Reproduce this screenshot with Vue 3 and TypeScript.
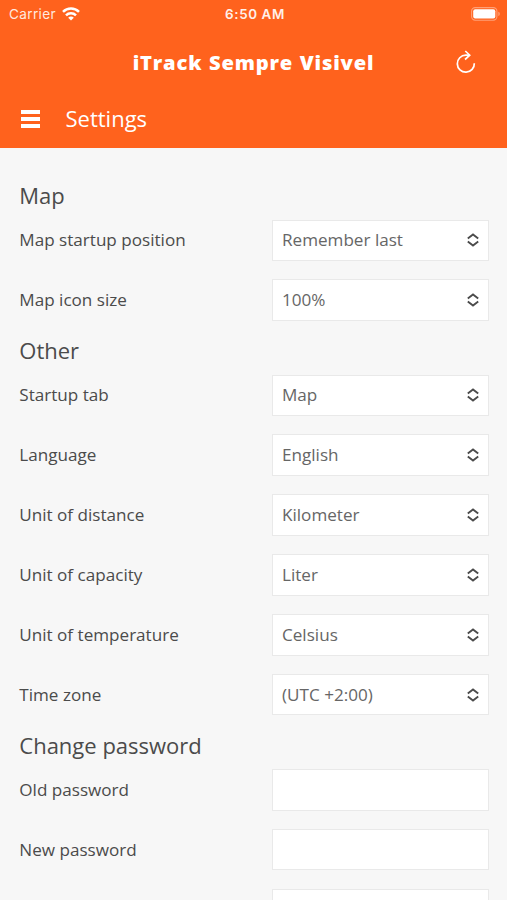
<script setup lang="ts">
interface Field {
  label: string
  value?: string
}

interface Section {
  title: string
  fields: Field[]
}

const sections: Section[] = [
  {
    title: 'Map',
    fields: [
      { label: 'Map startup position', value: 'Remember last' },
      { label: 'Map icon size', value: '100%' },
    ],
  },
  {
    title: 'Other',
    fields: [
      { label: 'Startup tab', value: 'Map' },
      { label: 'Language', value: 'English' },
      { label: 'Unit of distance', value: 'Kilometer' },
      { label: 'Unit of capacity', value: 'Liter' },
      { label: 'Unit of temperature', value: 'Celsius' },
      { label: 'Time zone', value: '(UTC +2:00)' },
    ],
  },
  {
    title: 'Change password',
    fields: [{ label: 'Old password' }, { label: 'New password' }, { label: '' }],
  },
]
</script>

<template>
  <div class="screen">
    <header class="header">
      <div class="status">
        <div class="carrier">
          <span>Carrier</span>
          <svg class="wifi" viewBox="0 0 18 14" fill="none" stroke="#fff" stroke-width="2.5">
            <path d="M1 4.900a11.400 11.400 0 0 1 16 0" />
            <path d="M4 8.300a7.100 7.100 0 0 1 10 0" />
            <path d="M9 13.600 6.200 10.800a3.900 3.900 0 0 1 5.600 0z" fill="#fff" stroke="none" />
          </svg>
        </div>
        <span class="time">6:50 AM</span>
        <svg class="battery" viewBox="0 0 30 14">
          <rect x="0.6" y="0.6" width="25.3" height="12.6" rx="3.6" fill="none" stroke="#fff" stroke-opacity=".4" stroke-width="1.1" />
          <rect x="2.2" y="2.3" width="22.1" height="9.2" rx="2" fill="#fff" />
          <path d="M27.3 4.800c2 .6 2 3.700 0 4.300z" fill="#fff" fill-opacity=".4" />
        </svg>
      </div>
      <div class="brand">
        <h1>iTrack Sempre Visivel</h1>
        <button class="refresh" aria-label="Refresh">
          <svg viewBox="0 0 20 24" fill="none" stroke="#fff" stroke-width="1.7">
            <path d="M18.300 13.200A8.500 8.500 0 1 1 9.800 5.200H13" />
            <path d="M9.300 1 13.700 5.200 9 9.500" />
          </svg>
        </button>
      </div>
      <div class="toolbar">
        <button class="menu" aria-label="Menu"><i></i><i></i><i></i></button>
        <h2>Settings</h2>
      </div>
    </header>
    <main class="content">
      <section v-for="section in sections" :key="section.title">
        <h3>{{ section.title }}</h3>
        <div v-for="field in section.fields" :key="field.label" class="row">
          <span class="label">{{ field.label }}</span>
          <div class="control">
            <template v-if="field.value">
              <span>{{ field.value }}</span>
              <svg class="arrows" viewBox="0 0 12 14" fill="none" stroke="#4b4b4b" stroke-width="1.9">
                <path d="M.8 5.400 6 1.500l5.200 3.900M.8 8.600 6 12.500l5.200-3.900" />
              </svg>
            </template>
          </div>
        </div>
      </section>
    </main>
  </div>
</template>

<style>
body {
  margin: 0;
  overflow: hidden;
}
</style>

<style scoped>
.screen {
  box-sizing: border-box;
  width: 507px;
  height: 900px;
  overflow: hidden;
  background: #f7f7f7;
  color: #4b4b4b;
  font-family: "Open Sans", sans-serif;
}

h1,
h2,
h3 {
  margin: 0;
  font-weight: 400;
}

button {
  padding: 0;
  border: 0;
  background: none;
}

svg {
  display: block;
}

.header {
  height: 148px;
  background: #ff621d;
  color: #fff;
}

.status {
  display: grid;
  grid-template-columns: 1fr auto 1fr;
  align-items: center;
  height: 27px;
  padding: 0 6px 0 9px;
  font-family: Inter, sans-serif;
  font-size: 13.6px;
}

.carrier {
  display: flex;
  align-items: center;
  gap: 6px;
  color: #ffe9df;
  letter-spacing: 0.35px;
}

.wifi {
  width: 18px;
  height: 14px;
}

.time {
  color: #fff0e9;
  font-size: 13.4px;
  font-weight: 600;
  letter-spacing: 0.6px;
}

.battery {
  width: 30px;
  height: 14px;
  justify-self: end;
}

.brand {
  display: grid;
  grid-template-columns: 1fr auto 1fr;
  align-items: center;
  height: 70px;
}

.brand h1 {
  grid-column: 2;
  font-size: 20.200px;
  font-weight: 800;
  line-height: 30px;
  letter-spacing: 0.800px;
  word-spacing: 0.700px;
  white-space: nowrap;
}

.refresh {
  justify-self: end;
  margin-right: 31.500px;
}

.refresh svg {
  width: 20px;
  height: 24px;
}

.toolbar {
  display: flex;
  align-items: center;
  gap: 26px;
  height: 44px;
  padding-left: 20.500px;
}

.menu {
  display: flex;
  flex-direction: column;
  gap: 3.400px;
  width: 19px;
}

.menu i {
  height: 4px;
  background: #fff;
}

.toolbar h2 {
  margin-bottom: 3px;
  font-size: 22px;
  line-height: 30px;
}

.content {
  padding: 27px 18.500px 0 19.300px;
}

h3 {
  height: 35.400px;
  font-size: 22px;
  line-height: 41px;
}

.row {
  display: flex;
  align-items: center;
  justify-content: space-between;
  height: 59.850px;
}

.label {
  margin-bottom: 1px;
  font-size: 17.100px;
}

.control {
  box-sizing: border-box;
  display: flex;
  align-items: center;
  justify-content: space-between;
  width: 216.500px;
  height: 41.500px;
  padding: 0 8.500px 0 9px;
  border: 1px solid #e9e9e9;
  background: #fff;
  color: #666;
  font-size: 17.100px;
}

.control span {
  margin-bottom: 1px;
}

.arrows {
  width: 12px;
  height: 14px;
}
</style>
